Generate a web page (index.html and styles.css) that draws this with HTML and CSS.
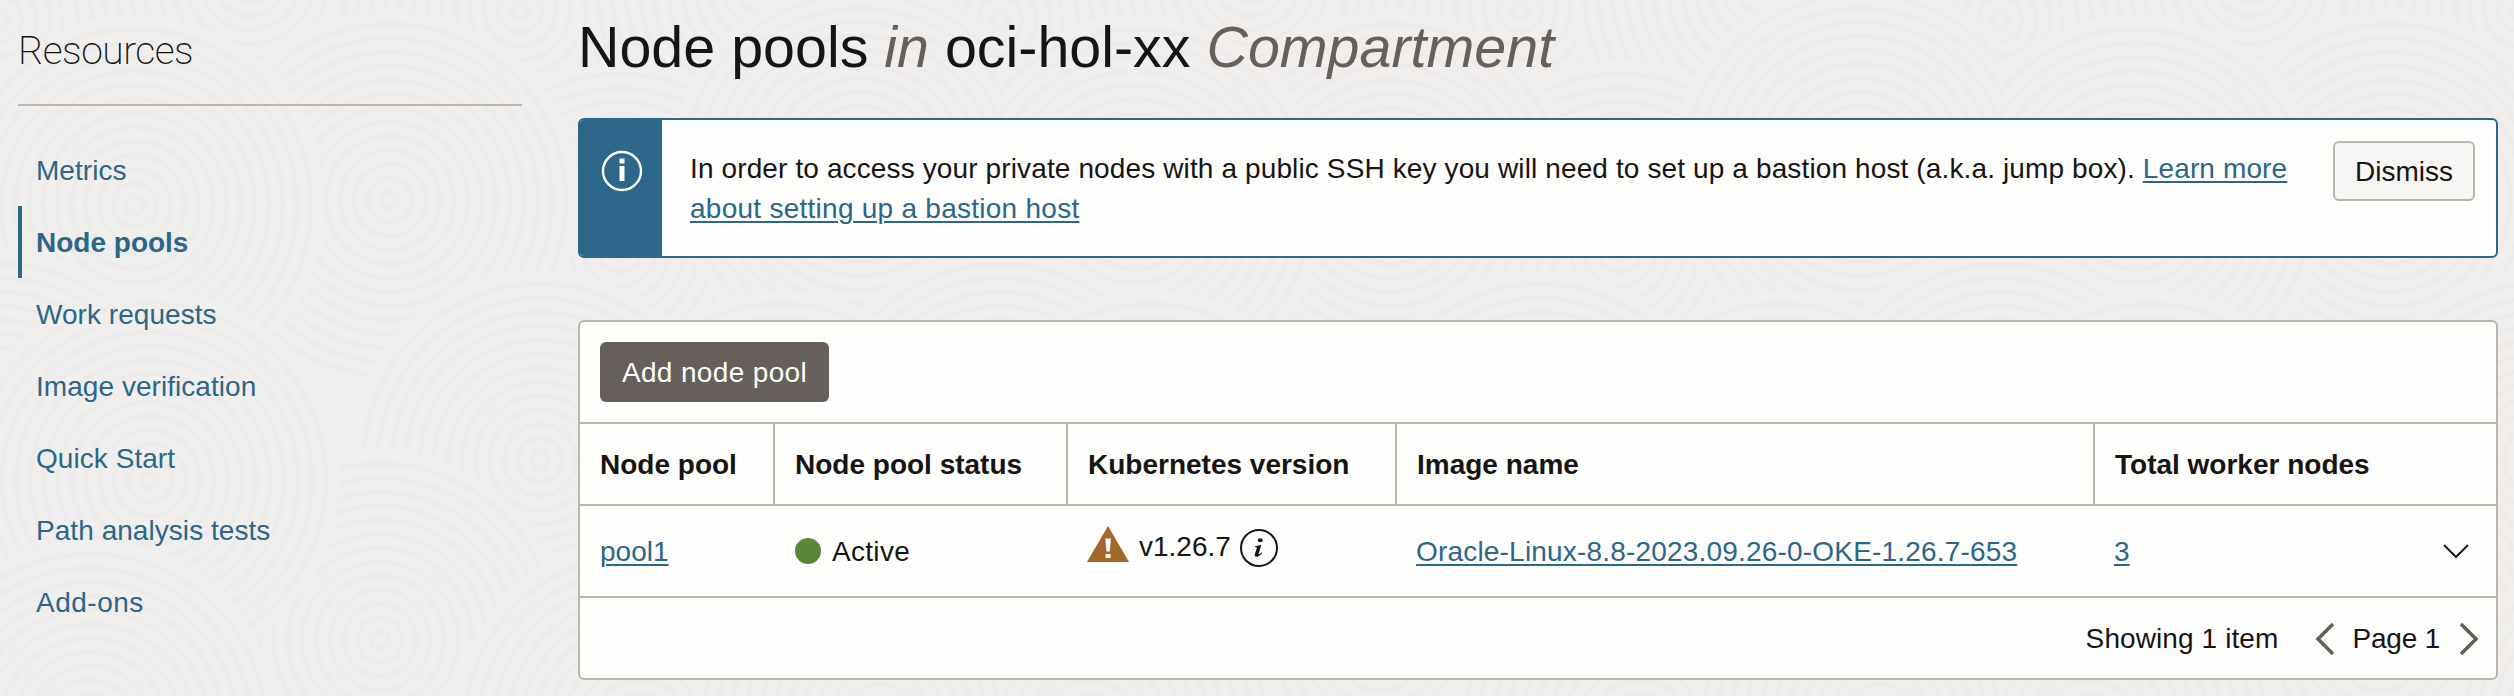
FILE: index.html
```html
<!DOCTYPE html>
<html lang="en">
<head>
<meta charset="utf-8">
<title>Node pools</title>
<link rel="stylesheet" href="styles.css">
</head>
<body>
<svg class="texture" aria-hidden="true" width="2514" height="696">
  <defs>
    <g id="rings">
      <circle r="190" class="disc"/>
      <circle r="176"/><circle r="162"/><circle r="148"/><circle r="134"/><circle r="120"/><circle r="106"/><circle r="92"/><circle r="78"/><circle r="64"/><circle r="50"/><circle r="36"/><circle r="22"/><circle r="9"/>
    </g>
    <pattern id="contours" width="1000" height="720" patternUnits="userSpaceOnUse">
      <use href="#rings" x="0" y="20"/><use href="#rings" x="1000" y="20"/>
      <use href="#rings" x="250" y="-20"/><use href="#rings" x="520" y="10"/><use href="#rings" x="760" y="-10"/>
      <use href="#rings" x="620" y="250"/><use href="#rings" x="860" y="170"/>
      <use href="#rings" x="390" y="200"/><use href="#rings" x="135" y="205"/>
      <use href="#rings" x="0" y="440"/><use href="#rings" x="1000" y="440"/>
      <use href="#rings" x="540" y="460"/><use href="#rings" x="780" y="480"/>
      <use href="#rings" x="380" y="640"/><use href="#rings" x="150" y="480"/>
      <use href="#rings" x="90" y="730"/><use href="#rings" x="640" y="730"/><use href="#rings" x="880" y="720"/>
    </pattern>
  </defs>
  <rect width="2514" height="696" fill="url(#contours)"/>
</svg>
<div class="page">
  <aside class="sidebar">
    <h2 class="sidebar-title">Resources</h2>
    <nav class="menu">
      <a class="menu-item">Metrics</a>
      <a class="menu-item active">Node pools</a>
      <a class="menu-item">Work requests</a>
      <a class="menu-item">Image verification</a>
      <a class="menu-item">Quick Start</a>
      <a class="menu-item">Path analysis tests</a>
      <a class="menu-item addons">Add-ons</a>
    </nav>
  </aside>
  <main class="content">
    <h1 class="title">Node pools <em>in</em> oci-hol-xx <em>Compartment</em></h1>
    <section class="banner">
      <div class="banner-side">
        <svg width="42" height="42" viewBox="0 0 42 42"><circle cx="21" cy="21" r="19" fill="none" stroke="#fff" stroke-width="2.4"/><path d="M18.500 8.500h5v5h-5zM18.500 16h5v15h-5z" fill="#fff"/></svg>
      </div>
      <p class="banner-text">In order to access your private nodes with a public SSH key you will need to set up a bastion host (a.k.a. jump box). <a class="link">Learn more<br><span class="second-line">about setting up a bastion host</span></a></p>
      <button class="btn dismiss">Dismiss</button>
    </section>
    <section class="panel">
      <div class="toolbar"><button class="btn add">Add node pool</button></div>
      <div class="row head">
        <div class="cell"><span>Node pool</span></div>
        <div class="cell"><span>Node pool status</span></div>
        <div class="cell"><span>Kubernetes version</span></div>
        <div class="cell"><span>Image name</span></div>
        <div class="cell"><span>Total worker nodes</span></div>
      </div>
      <div class="row body">
        <div class="cell"><a class="link">pool1</a></div>
        <div class="cell"><i class="dot"></i><span class="status">Active</span></div>
        <div class="cell version">
          <svg class="warn" width="42" height="36" viewBox="0 0 42 36"><path d="M21 0L42 36H0z" fill="#a36727"/><path d="M18.300 12.500h5.600l-1.200 13h-3.200zM18.600 28h5v4h-5z" fill="#fff"/></svg>
          <span>v1.26.7</span>
          <svg class="info" width="40" height="40" viewBox="0 0 40 40"><circle cx="20" cy="20" r="18" fill="none" stroke="#161513" stroke-width="2"/><ellipse cx="21.300" cy="12.300" rx="2.500" ry="2" fill="#161513"/><path d="M16 18.200l6.300-1.200-2.700 8.800c-.2.800.2.900 2.700-1.400l.7.800c-2.500 2.800-4 3.600-5.600 3.600-1.400 0-2-.9-1.600-2.200l2.200-7.100-2-.4z" fill="#161513"/></svg>
        </div>
        <div class="cell"><a class="link image">Oracle-Linux-8.8-2023.09.26-0-OKE-1.26.7-653</a></div>
        <div class="cell last"><a class="link">3</a>
          <svg width="28" height="16" viewBox="0 0 28 16"><path d="M2 2l12 12L26 2" fill="none" stroke="#161513" stroke-width="2"/></svg>
        </div>
      </div>
      <div class="footer">
        <span class="count">Showing 1 item</span>
        <svg width="20" height="34" viewBox="0 0 20 34"><path d="M18 2L3 17l15 15" fill="none" stroke="#665f5b" stroke-width="3.500"/></svg>
        <span class="page-no">Page 1</span>
        <svg width="20" height="34" viewBox="0 0 20 34"><path d="M2 2l15 15L2 32" fill="none" stroke="#665f5b" stroke-width="3.500"/></svg>
      </div>
    </section>
  </main>
</div>
</body>
</html>
```
FILE: styles.css
```css
* { box-sizing: border-box; }
body { margin: 0; background: #f0efed; color: #161513; font: 28px/40px "Liberation Sans", Arial, sans-serif; overflow: hidden; }
.texture { position: absolute; left: 0; top: 0; z-index: -1; }
.texture circle { fill: none; stroke: #edecea; stroke-width: 5; }
.texture .disc { fill: #f0efed; stroke: none; }

.page { display: flex; gap: 56px; padding: 0 16px 0 18px; height: 696px; }
.sidebar { width: 504px; flex: none; }
.sidebar-title { margin: 0; height: 106px; padding-top: 27px; border-bottom: 2px solid #bab5b0; font: 200 39px/48px Roboto, "Liberation Sans", sans-serif; letter-spacing: -0.5px; }
.menu { padding-top: 28px; display: flex; flex-direction: column; }
.menu-item { height: 72px; display: flex; align-items: center; padding: 2px 0 0 14px; border-left: 4px solid transparent; color: #2c6688; letter-spacing: 0.05px; }
.menu-item.active { border-color: #2c6688; font-weight: 700; letter-spacing: 0; }
.menu-item.addons { letter-spacing: 0.5px; }

.content { flex: 1; min-width: 0; display: flex; flex-direction: column; }
.title { margin: 0; height: 118px; padding-top: 14px; font-size: 57.4px; line-height: 66px; font-weight: 400; white-space: nowrap; }
.title em { color: #665f5b; }

.banner { display: flex; height: 140px; border: 2px solid #2c6688; border-radius: 6px; background: #fdfdfb; overflow: hidden; }
.banner-side { width: 82px; flex: none; background: #2c6688; display: flex; justify-content: center; align-items: flex-start; padding: 30px 0 0 1px; }
.banner-text { margin: 0; padding: 29px 0 0 28px; flex: 1; letter-spacing: 0.125px; white-space: nowrap; }
.second-line { letter-spacing: 0.26px; }
.link { color: #2c6688; text-decoration: underline; text-decoration-thickness: 2px; text-underline-offset: 3px; }
.btn { height: 60px; border-radius: 6px; padding: 1px 0 0; font: inherit; color: inherit; white-space: nowrap; }
.dismiss { width: 142px; margin: 21px 21px 0 0; background: #f7f6f5; border: 2px solid #bab5b0; }

.panel { margin-top: 62px; height: 360px; border: 2px solid #bab5b0; border-radius: 6px; background: #fdfdfb; }
.toolbar { height: 100px; padding: 20px; }
.add { width: 229px; border: 0; background: #665f5b; color: #fff; letter-spacing: 0.35px; }
.row { display: grid; grid-template-columns: 193px 293px 329px 698px 1fr; border-top: 2px solid #bab5b0; }
.cell { display: flex; align-items: center; padding-left: 20px; white-space: nowrap; }
.head { height: 82px; font-weight: 700; }
.head .cell { padding-top: 2px; }
.head .cell + .cell { border-left: 2px solid #bab5b0; }
.body { height: 92px; }
.body .link, .status { padding-top: 1px; }
.body .cell + .cell { padding-left: 21px; }
.image { letter-spacing: 0.19px; }
.dot { width: 26px; height: 26px; border-radius: 50%; background: #5b8434; margin: 0 11px 0 1px; }
.status { letter-spacing: 0.3px; }
.version span { margin: -9px 8px 0 10px; }
.version .warn { margin-top: -14px; }
.version .info { margin-top: -6px; }
.last { justify-content: space-between; padding-right: 26px; }
.footer { height: 84px; border-top: 2px solid #bab5b0; display: flex; align-items: center; justify-content: flex-end; padding-right: 17px; white-space: nowrap; }
.count { margin-right: 37px; letter-spacing: 0.1px; }
.page-no { margin: 0 19px 0 17px; letter-spacing: -0.2px; }
```
